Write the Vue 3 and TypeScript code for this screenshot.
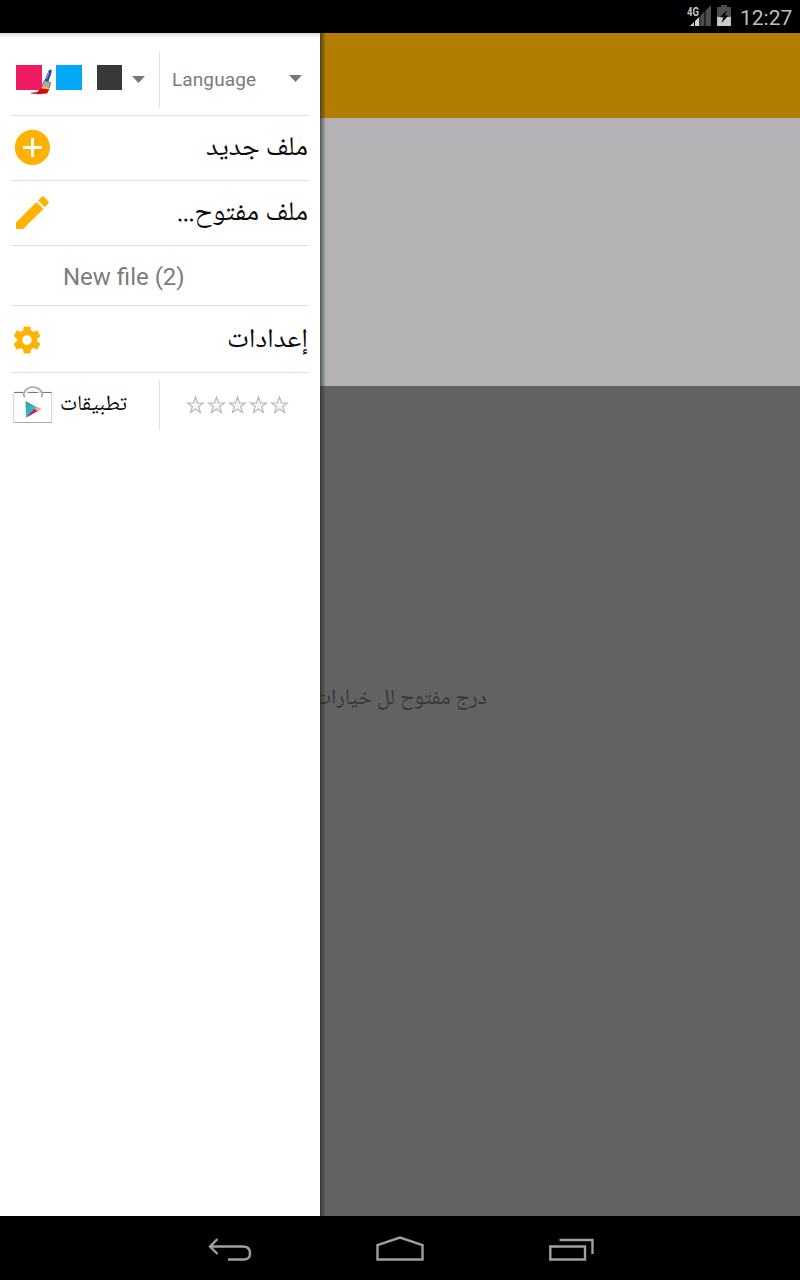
<script setup lang="ts">
const swatches: string[] = ['pink', 'blue', 'dark']
const stars: number[] = [0, 1, 2, 3, 4]
</script>

<template>
  <div class="screen">
    <header class="status">
      <svg class="signal" width="24" height="22" viewBox="0 0 24 22">
        <path d="M3 21 L24 0 V21Z" fill="#4b4e4b" />
        <path d="M3 21 L13 11.2 V21Z" fill="#d0d0d0" />
        <path d="M7.5 12V21M12.8 8V21M18 4V21" stroke="#000" stroke-width="1" />
        <text x="0" y="10.5" class="net" textLength="12" lengthAdjust="spacingAndGlyphs">4G</text>
      </svg>
      <svg class="battery" width="14" height="21" viewBox="0 0 14 21">
        <path d="M4 0H10V2H14V21H0V2H4Z" fill="#4b4e4b" />
        <path d="M0 12H14V21H0Z" fill="#c9c9c9" />
        <path d="M10 5L3 12.2H6.3L4.5 18L11.5 10.5H8Z" fill="#050505" />
      </svg>
      <span class="clock">12:27</span>
    </header>

    <div class="body">
      <aside class="drawer">
        <div class="row top">
          <div class="theme">
            <i v-for="s in swatches" :key="s" class="swatch" :class="s"></i>
            <svg class="brush" width="22" height="26" viewBox="0 0 22 26">
              <path d="M18.2 1.4L20.2 1L20 4L17 12.5L14 11.5Z" fill="#2454a6" stroke="#19305f" stroke-width=".7" />
              <path d="M18 3L15.4 10" stroke="#82a8de" stroke-width="1" />
              <path d="M13.5 11.5L19.5 13.5L18.5 19H11L12 14Z" fill="#aaa" stroke="#555" stroke-width=".7" />
              <path d="M11 17.5L19 18.8L18 21H10Z" fill="#ffc34d" />
              <path d="M10 19.7L18 20.5L16 24.3L8 25L0 24.2L6 23.2Z" fill="#df0808" stroke="#8e1010" stroke-width=".4" />
            </svg>
            <svg class="caret c1" width="13" height="8" viewBox="0 0 13 8"><path d="M0 0H13L6.5 7Z" fill="#777" /></svg>
          </div>
          <div class="language">
            <span class="lang">Language</span>
            <svg class="caret c2" width="13" height="8" viewBox="0 0 13 8"><path d="M0 0H13L6.5 7Z" fill="#777" /></svg>
          </div>
        </div>
        <div class="row r65 new">
          <svg width="36" height="36" viewBox="0 0 36 36">
            <circle cx="18.4" cy="18.4" r="17.6" fill="#ffb300" />
            <path d="M18.5 9V28M9 18.5H28" stroke="#fff" stroke-width="3" />
          </svg>
          <svg class="ar" width="104" height="44"><text x="103" y="29" direction="rtl" textLength="102" lengthAdjust="spacingAndGlyphs">ملف جديد</text></svg>
        </div>
        <div class="row r65 open">
          <svg width="34" height="34" viewBox="0 0 34 34">
            <path d="M0 26.5L20.5 6L27.5 13L7 33H0Z" fill="#ffb300" />
            <path d="M22 4.5L26 .5Q26.8 -.2 27.6 .5L32.6 5.6Q33.3 6.3 32.6 7.1L29 11.2Z" fill="#ffb300" />
          </svg>
          <svg class="ar" width="134" height="44"><text x="133" y="29" direction="rtl" textLength="131" lengthAdjust="spacingAndGlyphs">ملف مفتوح...</text></svg>
        </div>
        <div class="row file"><span>New file (2)</span></div>
        <div class="row settings">
          <svg width="28" height="28" viewBox="1.7 2 20.6 20">
            <path fill="#ffb300" d="M19.43 12.98c.04-.32.07-.64.07-.98s-.03-.66-.07-.98l2.11-1.65c.19-.15.24-.42.12-.64l-2-3.46c-.12-.22-.39-.3-.61-.22l-2.49 1c-.52-.4-1.08-.73-1.69-.98l-.38-2.65C14.46 2.18 14.25 2 14 2h-4c-.25 0-.46.18-.49.42l-.38 2.65c-.61.25-1.17.59-1.69.98l-2.49-1c-.23-.09-.49 0-.61.22l-2 3.46c-.13.22-.07.49.12.64l2.11 1.65c-.04.32-.07.65-.07.98s.03.66.07.98l-2.11 1.65c-.19.15-.24.42-.12.64l2 3.46c.12.22.39.3.61.22l2.49-1c.52.4 1.08.73 1.69.98l.38 2.65c.03.24.24.42.49.42h4c.25 0 .46-.18.49-.42l.38-2.65c.61-.25 1.17-.59 1.69-.98l2.49 1c.23.09.49 0 .61-.22l2-3.46c.12-.22.07-.49-.12-.64l-2.11-1.65zM12 15.5c-1.93 0-3.5-1.57-3.5-3.5s1.57-3.5 3.5-3.5 3.5 1.57 3.5 3.5-1.57 3.5-3.5 3.5z" />
          </svg>
          <svg class="ar" width="84" height="44"><text x="83" y="30.5" direction="rtl" textLength="81" lengthAdjust="spacingAndGlyphs">إعدادات</text></svg>
        </div>
        <div class="row bottom">
          <div class="apps">
            <svg width="40" height="38" viewBox="0 0 40 38">
              <defs>
                <linearGradient id="g1" x1="0" y1="0" x2="1" y2="1"><stop offset="0" stop-color="#27a78e" /><stop offset=".5" stop-color="#35b8cf" /><stop offset="1" stop-color="#6ed5ae" /></linearGradient>
              </defs>
              <rect x=".7" y="6.2" width="38" height="30.3" rx="1.2" fill="#fff" stroke="#d2cfd4" stroke-width="1" />
              <path d="M1 6.5H10M15 6.5H25M30 6.5H38.6" stroke="#77747a" stroke-width="1.2" />
              <path d="M1 36.5H39" stroke="#aaa7ac" stroke-width="1" />
              <path d="M12 11C9.5 9 11 5 14 3C17.5 .6 22.5 .6 26 3C29 5 30.5 9 28 11" fill="none" stroke="#aaa6ae" stroke-width="1.7" />
              <path d="M12.5 15L28 23.2L13 31.5Z" fill="url(#g1)" />
              <path d="M13 31.5L21.5 22.5L25 25Z" fill="#c22564" />
              <path d="M21.5 22.5L24 20.5L28.5 23.3L24.5 25.5Z" fill="#f5ac65" />
            </svg>
            <svg class="ar small" width="70" height="38"><text x="68" y="24" direction="rtl" textLength="67" lengthAdjust="spacingAndGlyphs">تطبيقات</text></svg>
          </div>
          <div class="stars">
            <svg v-for="n in stars" :key="n" width="21" height="20" viewBox="0 0 21 20">
              <path d="M10.5 2L12.5 8H18.3L13.7 11.5L15.4 17.4L10.5 13.9L5.6 17.4L7.3 11.5L2.7 8H8.5Z" fill="#f5f5f5" stroke="#b8b8b8" stroke-width="1.2" />
            </svg>
          </div>
        </div>
      </aside>

      <main class="content">
        <div class="toolbar"></div>
        <div class="panel"></div>
        <div class="empty">
          <svg class="hint" width="172" height="44"><text x="167" y="26" direction="rtl" textLength="173" lengthAdjust="spacingAndGlyphs">درج مفتوح لل خيارات</text></svg>
        </div>
        <div class="shade"></div>
      </main>
    </div>

    <nav class="nav">
      <svg width="800" height="64" fill="none" stroke="#a0a0a0" stroke-width="2.4">
        <path d="M210 30.5H243Q250 30.5 250 37.2T243 43.5H228M217.5 23L210 30.5L217.5 38" />
        <path d="M377.5 43.5V29L400 21.5L422.5 29V43.5Z" />
        <path d="M550.3 30.5H585V43.5H550.3ZM559.5 24H592.5V38" />
      </svg>
    </nav>
  </div>
</template>

<style>
body { margin: 0; background: #000; }
</style>

<style scoped>
.screen { width: 800px; height: 1280px; display: flex; flex-direction: column; overflow: hidden; font-family: Roboto, "Noto Sans", sans-serif; background: #000; }
svg { display: block; flex: none; }
.status { height: 33px; flex: none; display: flex; justify-content: flex-end; padding-right: 8px; box-sizing: border-box; }
.signal { margin-top: 5px; margin-right: 6px; overflow: visible; }
.net { font: bold 12px Roboto, sans-serif; fill: #c6c6c6; stroke: #000; stroke-width: 2px; paint-order: stroke; }
.battery { margin-top: 5px; margin-right: 9px; }
.clock { color: #bebebe; font-size: 21px; line-height: 36px; width: 52px; white-space: nowrap; }
.body { height: 1183px; display: flex; flex: none; }
.drawer { width: 320px; box-sizing: border-box; padding: 0 11px; background: linear-gradient(#dcdcdc, #fff 5px); flex: none; position: relative; z-index: 1; }
.row { box-sizing: border-box; border-bottom: 1px solid #e1e0e1; display: flex; position: relative; }
.top { height: 83px; padding-top: 18px; }
.theme { width: 149px; height: 57px; box-sizing: border-box; border-right: 1px solid #e1e0e1; display: flex; position: relative; padding: 14px 0 0 5px; }
.swatch { width: 26px; height: 25px; margin-right: 14px; }
.pink { background: #f01c61; }
.blue { background: #03a9f9; }
.dark { background: #383838; width: 25.5px; margin-left: .5px; }
.brush { position: absolute; left: 20px; top: 18px; }
.caret { margin-top: 11px; margin-left: -4px; }
.language { display: flex; flex: 1; justify-content: space-between; padding: 0 7px 0 12px; }
.lang { color: #7b7b7b; font-size: 19px; line-height: 57px; letter-spacing: .1px; }
.c2 { margin-top: 24px; }
.r65 { height: 65px; justify-content: space-between; }
.new > svg:first-child { margin: 13px 0 0 3px; }
.open > svg:first-child { margin: 15px 0 0 5px; }
.ar { margin-top: 10px; overflow: visible; }
.ar text { font: 27px "Noto Naskh Arabic", "Noto Sans Arabic", "DejaVu Sans", sans-serif; fill: #0b0b0b; }
.file { height: 60px; padding-left: 52px; font-size: 24px; line-height: 62px; color: #7b7b7b; }
.settings { height: 67px; justify-content: space-between; }
.settings > svg:first-child { margin: 20px 0 0 2px; }
.bottom { border: 0; height: 59px; padding-top: 7px; }
.apps { width: 149px; height: 50px; box-sizing: border-box; border-right: 1px solid #e1e0e1; display: flex; padding: 6px 0 0 2px; }
.ar.small { margin: 0 0 0 6px; }
.ar.small text { font-size: 21.5px; }
.stars { display: flex; padding: 15px 0 0 25px; }
.content { flex: 1; position: relative; display: flex; flex-direction: column; }
.toolbar { height: 85px; background: #b37d00; }
.panel { height: 268px; background: #b4b2b5; }
.empty { flex: 1; background: #646164; padding-top: 292px; }
.hint { overflow: visible; }
.hint text { font: 21.5px "Noto Naskh Arabic", "Noto Sans Arabic", "DejaVu Sans", sans-serif; fill: #363737; }
.shade { position: absolute; left: 0; top: 0; width: 6px; height: 100%; background: linear-gradient(90deg, rgba(30,35,30,.65), rgba(30,35,30,0)); }
.nav { height: 64px; flex: none; background: #000; }
</style>
